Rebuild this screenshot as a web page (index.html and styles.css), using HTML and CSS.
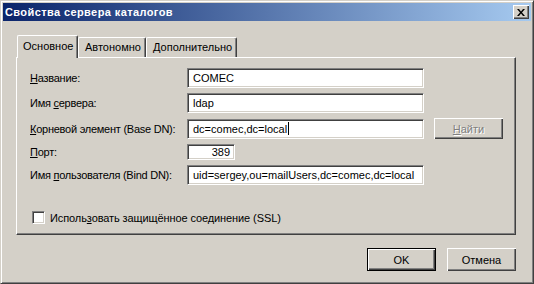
FILE: index.html
```html
<!DOCTYPE html>
<html lang="ru">
  <head>
    <meta charset="UTF-8" />
    <title>Свойства сервера каталогов</title>
    <link rel="stylesheet" href="styles.css">
  </head>
  <body>
    <div class="window">
      <div class="titlebar">
        <span class="title">Свойства сервера каталогов</span>
        <div class="close">
          <svg width="8" height="7" viewBox="0 0 8 7">
            <path d="M0 0h2l2 2.5L6 0h2L5 3.5 8 7H6L4 4.5 2 7H0l3-3.5z" fill="#000" />
          </svg>
        </div>
      </div>
      <div class="content">
        <div class="tabs">
          <div class="tab active">Основное</div>
          <div class="tab second">Автономно</div>
          <div class="tab third">Дополнительно</div>
        </div>
        <div class="panel">
          <div class="form">
            <div class="lbl"><u>Н</u>азвание:</div>
            <div class="field">COMEC</div>
            <div></div>

            <div class="lbl">Имя <u>с</u>ервера:</div>
            <div class="field">ldap</div>
            <div></div>

            <div class="lbl"><u>К</u>орневой элемент (Base DN):</div>
            <div class="field">dc=comec,dc=local<span class="caret"></span></div>
            <div class="btn disabled"><u>Н</u>айти</div>

            <div class="lbl"><u>П</u>орт:</div>
            <div class="field port">389</div>
            <div></div>

            <div class="lbl">Имя <u>п</u>ользователя (Bind DN):</div>
            <div class="field">uid=sergey,ou=mailUsers,dc=comec,dc=local</div>
            <div></div>
          </div>
          <div class="check">
            <span class="box"></span>
            <span>Исполь<u>з</u>овать защищённое соединение (SSL)</span>
          </div>
        </div>
        <div class="actions">
          <div class="btn default">OK</div>
          <div class="btn">Отмена</div>
        </div>
      </div>
    </div>
  </body>
</html>
```

FILE: styles.css
```css
body {
  margin: 0;
  font-family: "Liberation Sans", Arial, sans-serif;
  font-size: 11px;
  color: #000;
  background-color: #d4d0c8;
}
u {
  text-decoration: underline;
  text-underline-offset: 1px;
}
.window {
  width: 534px;
  height: 284px;
  box-sizing: border-box;
  background-color: #d4d0c8;
  border: 1px solid;
  border-color: #d4d0c8 #404040 #404040 #d4d0c8;
  box-shadow: inset 1px 1px #fff, inset -1px -1px #808080;
  padding: 2px;
  display: flex;
  flex-direction: column;
}
.titlebar {
  height: 18px;
  display: flex;
  align-items: center;
  justify-content: space-between;
  padding: 0 2px 0 2px;
  background: linear-gradient(to right, #0a246a, #a6caf0);
}
.title {
  color: #fff;
  font-weight: bold;
  font-size: 11px;
  letter-spacing: 0.4px;
}
.close {
  width: 16px;
  height: 14px;
  box-sizing: border-box;
  background-color: #d4d0c8;
  box-shadow: inset 1px 1px #fff, inset -1px -1px #404040, inset -2px -2px #808080;
  display: flex;
  align-items: center;
  justify-content: center;
}
.close svg {
  display: block;
  margin-left: -1px;
}
.content {
  padding: 14px 15px 0 13px;
}
.tabs {
  display: flex;
  align-items: flex-end;
  height: 22px;
  position: relative;
  z-index: 1;
}
.tab {
  height: 20px;
  box-sizing: border-box;
  padding: 3px 0 0 6px;
  border-top: 1px solid #fff;
  border-left: 1px solid #fff;
  border-right: 1px solid #404040;
  box-shadow: inset -1px 0 #808080;
  border-radius: 2px 2px 0 0;
  background-color: #d4d0c8;
  white-space: nowrap;
}
.tab.active {
  height: 23px;
  width: 61px;
  margin-left: 1px;
  margin-bottom: -1px;
  padding: 4px 0 0 5px;
}
.tab.second {
  width: 68px;
}
.tab.third {
  width: 91px;
}
.panel {
  height: 178px;
  box-sizing: border-box;
  border: 1px solid;
  border-color: #fff #404040 #404040 #fff;
  box-shadow: inset -1px -1px #808080;
  padding: 10px 13px 0 13px;
}
.form {
  display: grid;
  grid-template-columns: 147px 237px 69px;
  grid-template-rows: 20px 20px 21px 16px 20px;
  column-gap: 10px;
  row-gap: 5px;
  align-items: center;
}
.lbl {
  white-space: nowrap;
  letter-spacing: -0.25px;
}
.field {
  height: 20px;
  box-sizing: border-box;
  background-color: #fff;
  border: 1px solid;
  border-color: #808080 #fff #fff #808080;
  box-shadow: inset 1px 1px #404040, inset -1px -1px #d4d0c8;
  padding: 0 4px 0 5px;
  display: flex;
  align-items: center;
  white-space: nowrap;
}
.field.port {
  width: 48px;
  height: 16px;
  justify-content: flex-end;
}
.caret {
  width: 1px;
  height: 13px;
  background-color: #000;
  margin-left: 1px;
}
.btn {
  height: 23px;
  width: 69px;
  box-sizing: border-box;
  background-color: #d4d0c8;
  box-shadow: inset 1px 1px #fff, inset -1px -1px #404040, inset -2px -2px #808080;
  display: flex;
  align-items: center;
  justify-content: center;
}
.btn.disabled {
  height: 21px;
  color: #808080;
  text-shadow: 1px 1px #fff;
}
.btn.default {
  border: 1px solid #000;
}
.check {
  display: flex;
  align-items: center;
  gap: 5px;
  margin: 26px 0 0 2px;
  letter-spacing: -0.1px;
}
.box {
  width: 13px;
  height: 13px;
  box-sizing: border-box;
  background-color: #fff;
  border: 1px solid;
  border-color: #808080 #fff #fff #808080;
  box-shadow: inset 1px 1px #404040, inset -1px -1px #d4d0c8;
}
.actions {
  display: flex;
  justify-content: flex-end;
  gap: 11px;
  margin-top: 13px;
}
```
